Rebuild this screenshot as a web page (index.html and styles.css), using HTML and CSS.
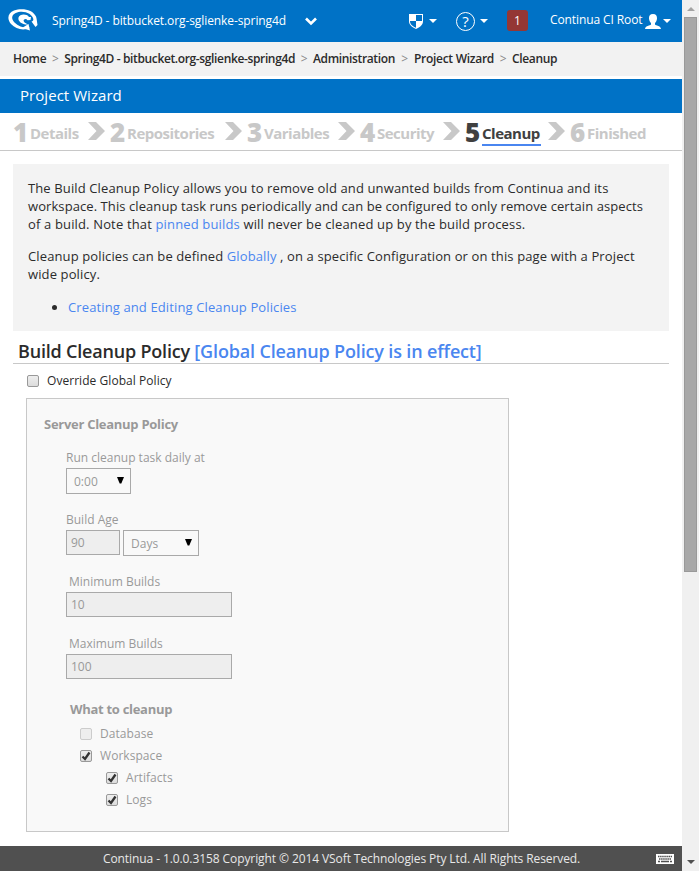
FILE: index.html
```
<!DOCTYPE html>
<html lang="en">
<head>
<meta charset="utf-8">
<title>Project Wizard - Cleanup</title>
<link rel="stylesheet" href="styles.css">
</head>
<body>
<svg class="defs" width="0" height="0">
  <symbol id="arrow" viewBox="0 0 17 18"><path d="M0 0h8l9 9-9 9H0l8.500-9z" fill="#c8c8c8"/></symbol>
  <symbol id="caret" viewBox="0 0 8 4"><path d="M0 0h8L4 4z" fill="#fff"/></symbol>
  <symbol id="select-caret" viewBox="0 0 7 7"><path d="M0 0h7L4.300 6.500H2.700z" fill="#000"/></symbol>
</svg>
<div class="page">
  <header class="topbar">
    <svg class="logo" viewBox="0 0 32 24">
      <path d="M23 19.500C17.500 23 9 21.500 4 16 -.5 10.500 1 5 7 2.500c8-3 19-1 22 6 .7 2 .8 4 1.500 8.500l-2 2-4-5.500c1.500-.3 2-1 1.800-2.500C25.500 6 18 2.500 11.500 4 4.500 5.500 3.500 10 7.500 14.500c4 4.300 10.500 5.800 15.500 5z" fill="#fff"/>
      <path d="M22 9C19.500 5.500 12.500 6 11.500 9.500c-1 4 4 7.500 10 7-4-1.500-6-3.500-4.300-5 1.300-1 2.300-.5 3.300.7L23.500 12l.5-3z" fill="#fff"/>
      <path d="M15 20l6.500-4 1.500 6.500z" fill="#fff"/>
    </svg>
    <span class="project">Spring4D - bitbucket.org-sglienke-spring4d</span>
    <svg class="chevron" viewBox="0 0 12 9"><path d="M1 1.500l5 5 5-5" fill="none" stroke="#fff" stroke-width="2.600"/></svg>
    <svg class="shield" viewBox="0 0 14 16"><path d="M0 1h14v7c0 4-3 6-7 8-4-2-7-4-7-8z" fill="#fff"/><path d="M7 2h6v6H7zM1 8h6v6.800C3.500 13 1 11.500 1 8z" fill="#0072c6"/></svg>
    <svg class="caret"><use href="#caret"/></svg>
    <span class="help">?</span>
    <svg class="caret"><use href="#caret"/></svg>
    <span class="badge">1</span>
    <span class="user">Continua CI Root</span>
    <svg class="person" viewBox="0 0 16 15"><path d="M8 0c3 0 4.200 2 4 4.500-.2 2.300-1 3.500-2 4.500v1.500c1 1.200 5.500 1 6 4.500H0c.5-3.500 5-3.300 6-4.500V9C5 8 4.200 6.800 4 4.500 3.800 2 5 0 8 0z" fill="#fff"/></svg>
    <svg class="caret"><use href="#caret"/></svg>
  </header>
  <nav class="crumbs">
    <a>Home</a><i>&gt;</i><a>Spring4D - bitbucket.org-sglienke-spring4d</a><i>&gt;</i><a>Administration</a><i class="wide">&gt;</i><a class="loose">Project Wizard</a><i>&gt;</i><a>Cleanup</a>
  </nav>
  <h1 class="title">Project Wizard</h1>
  <ol class="steps">
    <li><b>1</b><span>Details</span><svg><use href="#arrow"/></svg></li>
    <li><b>2</b><span>Repositories</span><svg><use href="#arrow"/></svg></li>
    <li><b>3</b><span>Variables</span><svg><use href="#arrow"/></svg></li>
    <li><b>4</b><span>Security</span><svg><use href="#arrow"/></svg></li>
    <li class="current"><b>5</b><span>Cleanup</span><svg><use href="#arrow"/></svg></li>
    <li><b>6</b><span>Finished</span></li>
  </ol>
  <main>
    <section class="info">
      <p>The Build Cleanup Policy allows you to remove old and unwanted builds from Continua and its<br><span class="tight">workspace. This cleanup task runs periodically and can be configured to only remove certain aspects</span><br><span class="open">of a build. Note that <a>pinned builds</a> will never be cleaned up by the build process.</span></p>
      <p>Cleanup policies can be defined <a>Globally</a> , on a specific Configuration or on this page with a Project<br>wide policy.</p>
      <ul><li><a>Creating and Editing Cleanup Policies</a></li></ul>
    </section>
    <h2>Build Cleanup Policy <a>[Global Cleanup Policy is in effect]</a></h2>
    <label class="check override"><span class="box"></span>Override Global Policy</label>
    <section class="policy">
      <h3>Server Cleanup Policy</h3>
      <div class="field">
        <label>Run cleanup task daily at</label>
        <div class="row"><div class="select time">0:00<svg><use href="#select-caret"/></svg></div></div>
      </div>
      <div class="field">
        <label>Build Age</label>
        <div class="row"><div class="input age">90</div><div class="select unit">Days<svg><use href="#select-caret"/></svg></div></div>
      </div>
      <div class="field">
        <label class="inset">Minimum Builds</label>
        <div class="input">10</div>
      </div>
      <div class="field">
        <label class="inset">Maximum Builds</label>
        <div class="input">100</div>
      </div>
      <h4>What to cleanup</h4>
      <label class="check"><span class="box off"></span>Database</label>
      <label class="check"><span class="box"><svg viewBox="0 0 12 12"><path d="M2.500 6.500l2.500 2.500 4.500-6.500" fill="none" stroke="#333" stroke-width="2.300"/></svg></span>Workspace</label>
      <label class="check child"><span class="box"><svg viewBox="0 0 12 12"><path d="M2.500 6.500l2.500 2.500 4.500-6.500" fill="none" stroke="#333" stroke-width="2.300"/></svg></span>Artifacts</label>
      <label class="check child"><span class="box"><svg viewBox="0 0 12 12"><path d="M2.500 6.500l2.500 2.500 4.500-6.500" fill="none" stroke="#333" stroke-width="2.300"/></svg></span>Logs</label>
    </section>
  </main>
  <footer>
    <span>Continua - 1.0.0.3158 Copyright © 2014 VSoft Technologies Pty Ltd. All Rights Reserved.</span>
    <svg class="keyboard" viewBox="0 0 18 10"><path d="M0 0h18v10H0z" fill="#fff"/><path d="M2 2.500h14M3 5h12" stroke="#505050" stroke-width="1.300" stroke-dasharray="1.500 .6"/><path d="M2 7.500h2m1 0h8m1 0h2" stroke="#505050" stroke-width="1.300"/></svg>
  </footer>
</div>
<aside class="scrollbar">
  <svg viewBox="0 0 8 4"><path d="M0 4h8L4 0z" fill="#a3a3a3"/></svg>
  <div class="thumb"></div>
  <svg class="down" viewBox="0 0 8 4"><path d="M0 0h8L4 4z" fill="#505050"/></svg>
</aside>
</body>
</html>
```
FILE: styles.css
```
* { box-sizing: border-box; }
body {
  margin: 0; width: 699px; height: 871px; overflow: hidden; display: flex;
  background: #fff; color: #2b2b2b; font: 12px/18px "Open Sans", sans-serif;
}
svg { display: block; flex: none; }
.defs { display: none; }
.page { width: 682px; height: 871px; display: flex; flex-direction: column; }
h1, h2, h3, h4, p, ul, ol { margin: 0; padding: 0; font-weight: 400; }
a { color: #4a86f0; }

.topbar { height: 42px; background: #0072c6; color: #fff; display: flex; align-items: center; padding: 0 11px 0 7px; }
.logo { width: 32px; height: 24px; margin: 0 13px 2px 0; }
.project { width: 253px; letter-spacing: -.09px; white-space: nowrap; }
.chevron { width: 12px; height: 9px; margin-top: 1px; }
.shield { width: 14px; height: 16px; margin-left: 92px; margin-right: 6px; }
.caret { width: 8px; height: 4px; }
.help {
  width: 19px; height: 19px; margin: 0 5px 0 19px; border: 1px solid #fff; border-radius: 50%;
  text-align: center; font-size: 15px; line-height: 17px;
}
.badge { width: 21px; height: 21px; margin: 0 22px 2px 19px; border-radius: 3px; background: #943735; text-align: center; line-height: 22px; }
.user { width: 95px; letter-spacing: -.1px; white-space: nowrap; padding-bottom: 2px; }
.person { width: 16px; height: 15px; margin-right: 2px; }

.crumbs { height: 34px; background: #f2f2f2; display: flex; align-items: center; padding-left: 13px; font-weight: 600; letter-spacing: -.36px; white-space: nowrap; }
.crumbs a { color: #2b2b2b; }
.crumbs i { width: 18px; text-align: center; font-style: normal; font-weight: 400; color: #888; }
.crumbs .wide { width: 19px; }
.crumbs .loose { letter-spacing: -.28px; }

.title { height: 34px; margin-top: 3px; padding-left: 20px; background: #0072c6; color: #fff; font-size: 15px; line-height: 32px; letter-spacing: .05px; }

.steps { height: 38px; padding-left: 13px; display: grid; grid-template-columns: 97px 137px 113px 105px 105px 1fr; border-bottom: 1px solid #c8c8c8; list-style: none; color: #c8c8c8; font-weight: 700; }
.steps li { display: flex; align-items: flex-start; padding-top: 7px; }
.steps b { width: 17px; font-size: 26px; line-height: 24px; letter-spacing: -1px; }
.steps span { font-size: 15px; line-height: 22px; height: 26px; padding-top: 2px; letter-spacing: -.5px; white-space: nowrap; }
.steps svg { width: 17px; height: 18px; margin: 2px 5px 0 auto; }
.steps .current { color: #404040; }
.steps .current span { border-bottom: 2px solid #4a86f0; padding-right: 1px; }

main { flex: 1; padding: 13px 13px 0; }
.info { height: 167px; padding: 15px 0 0 15px; background: #f3f3f3; font-size: 13px; letter-spacing: .12px; white-space: nowrap; }
.info p { margin-bottom: 14px; }
.info .tight { letter-spacing: .08px; }
.info .open { letter-spacing: .15px; }
.info ul { padding-left: 40px; margin-top: 15px; }

h2 { height: 33px; padding: 8px 0 0 5px; border-bottom: 1px solid #c8c8c8; font-size: 18px; line-height: 24px; font-weight: 600; letter-spacing: -.2px; }
h2 a { letter-spacing: -.16px; }

.check { height: 22px; display: flex; align-items: center; letter-spacing: .05px; }
.box { width: 12px; height: 12px; margin-right: 8px; border: 1px solid #999; border-radius: 2px; background: linear-gradient(#eee, #dcdcdc); }
.box.off { border-color: #ccc; background: #eee; }
.box svg { width: 12px; height: 12px; margin: -1px; }
.override { height: 34px; padding-left: 14px; }

.policy { width: 483px; height: 434px; margin-left: 13px; padding: 16px 0 0 39px; border: 1px solid #c8c8c8; background: #f9f9f9; color: #999; }
h3 { margin-left: -22px; height: 33px; font-size: 13px; font-weight: 700; letter-spacing: -.28px; }
.field { height: 62px; }
.field label { display: block; height: 20px; line-height: 19px; }
.field .inset { padding-left: 3px; }
.row { display: flex; gap: 3px; }
.input { width: 166px; height: 25px; padding-left: 4px; border: 1px solid #a9a9a9; background: #eee; line-height: 23px; }
.age { width: 54px; }
.select { height: 26px; padding: 0 6px 0 7px; display: flex; justify-content: space-between; border: 1px solid #a9a9a9; line-height: 26px; }
.select svg { width: 7px; height: 7px; margin-top: 8px; }
.time { width: 65px; }
.unit { width: 76px; }
h4 { height: 23px; padding-left: 4px; margin-top: 4px; font-size: 13px; line-height: 18px; font-weight: 700; letter-spacing: -.3px; }
.policy .check { padding-left: 14px; }
.policy .child { padding-left: 40px; }

footer { height: 25px; display: flex; align-items: center; justify-content: space-between; padding: 0 8px 0 103px; background: #505050; color: #e8e8e8; letter-spacing: -.09px; white-space: nowrap; }
.keyboard { width: 18px; height: 10px; }

.scrollbar { width: 17px; height: 871px; padding: 7px 0 12px; display: flex; flex-direction: column; align-items: center; background: #f0f0f0; }
.scrollbar svg { width: 8px; height: 4px; }
.thumb { width: 13px; height: 555px; margin-top: 6px; border: 1px solid #999; background: #a8a8a8; }
.scrollbar .down { margin-top: auto; margin-bottom: -5px; }
```
